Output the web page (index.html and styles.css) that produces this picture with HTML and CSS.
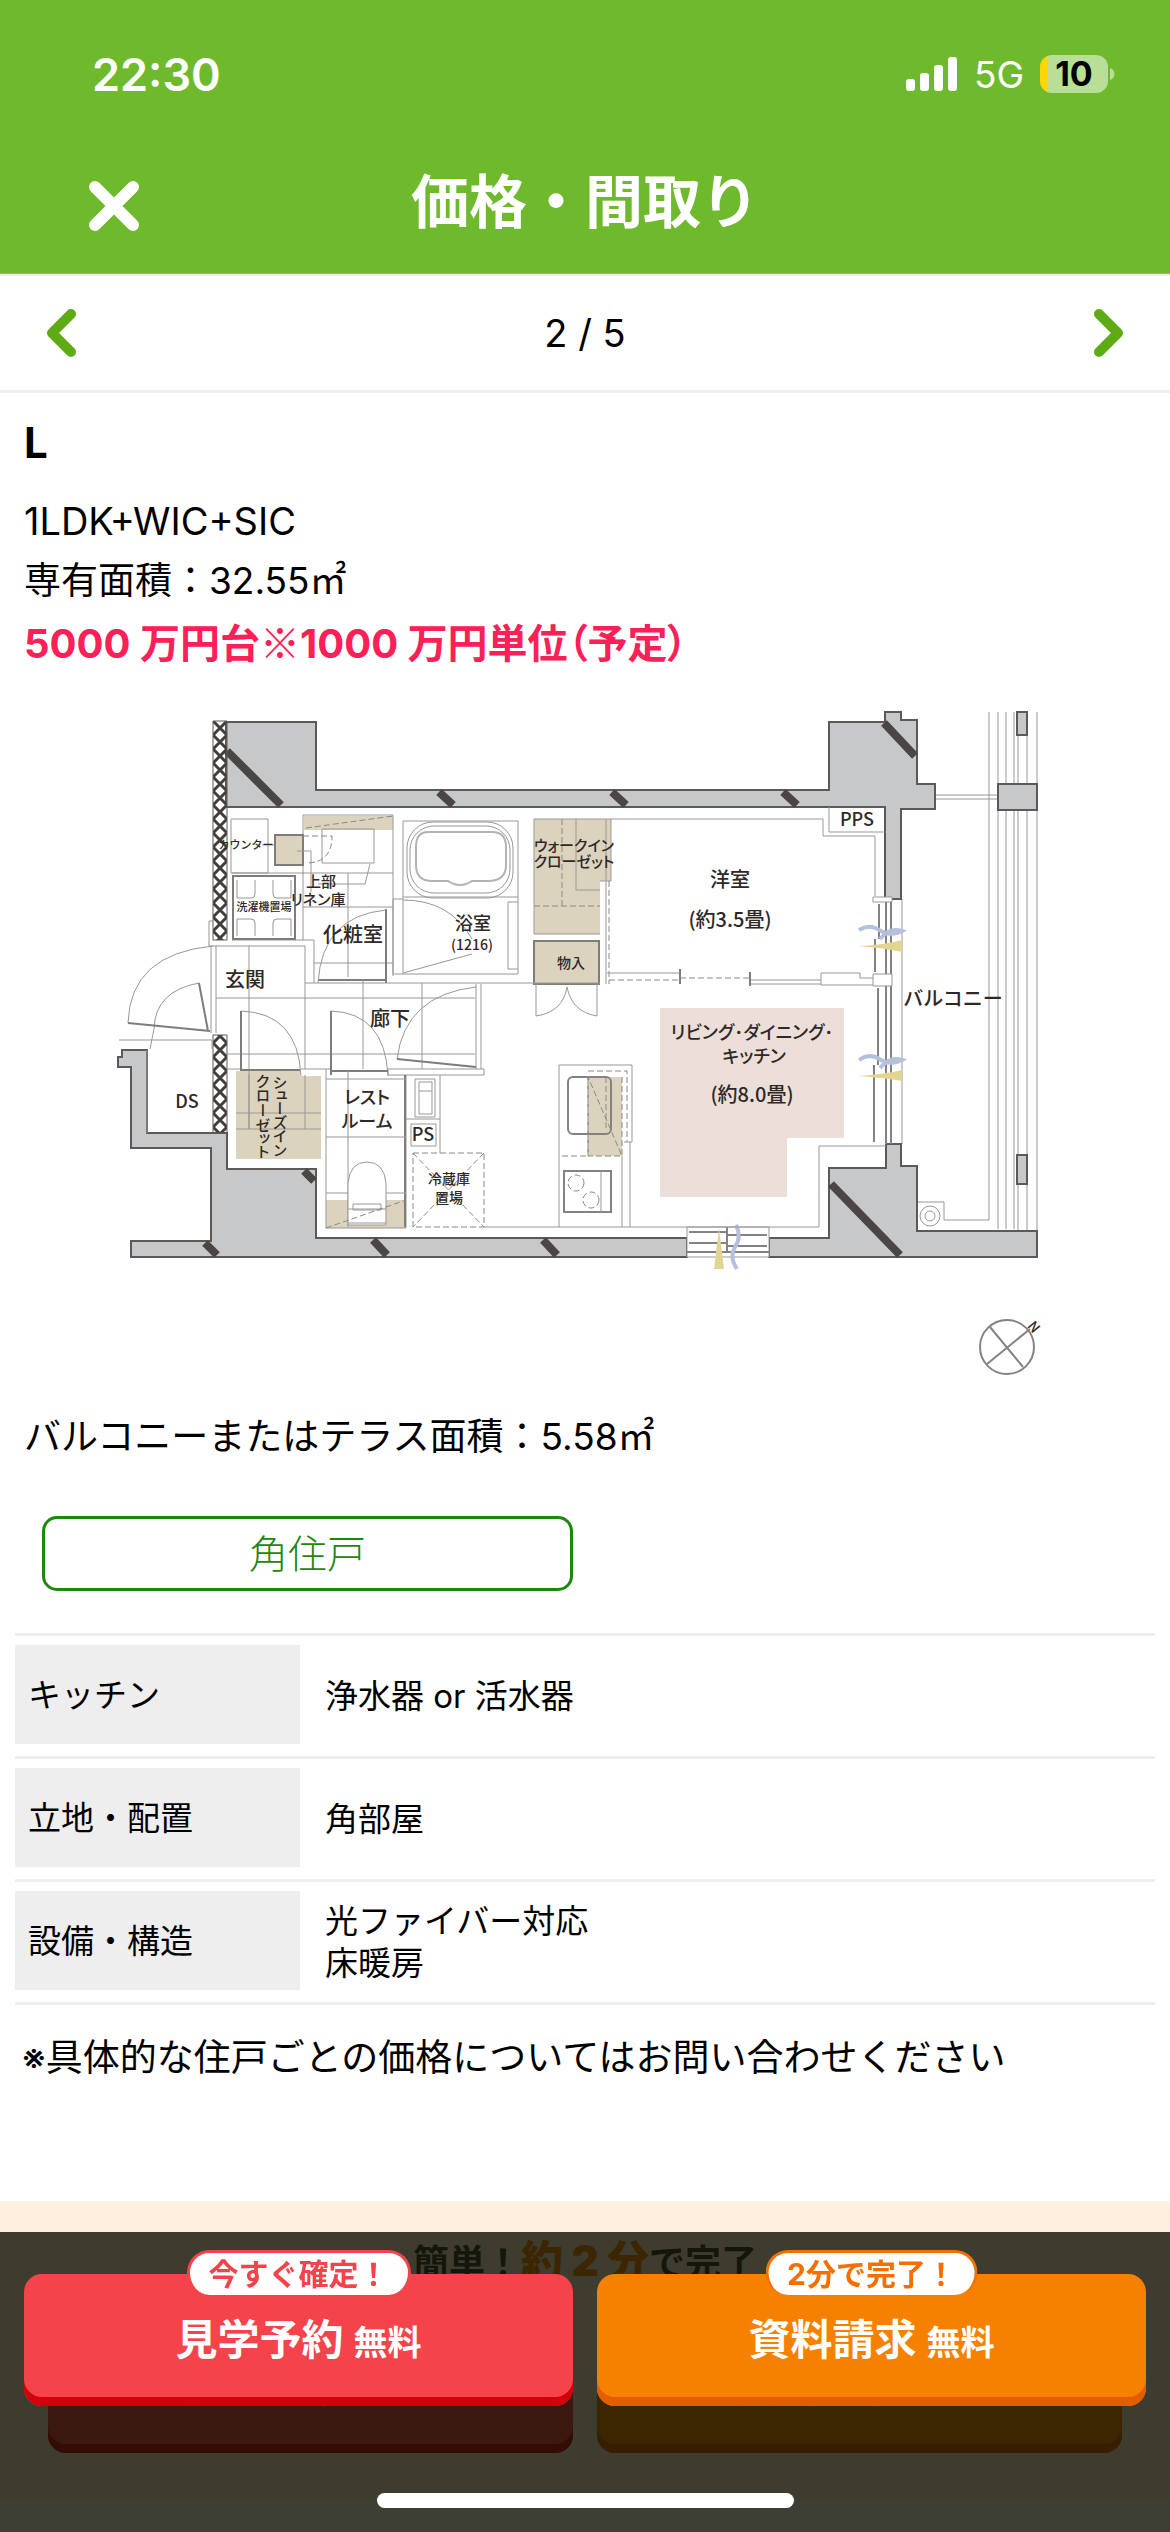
FILE: index.html
```html
<!DOCTYPE html>
<html lang="ja">
<head>
<meta charset="utf-8">
<meta name="viewport" content="width=device-width, initial-scale=1">
<title>価格・間取り</title>
<link rel="stylesheet" href="styles.css">
</head>
<body>
<header class="header">
  <div class="status">
    <span class="clock">22:30</span>
    <div class="status-icons">
      <svg class="signal" viewBox="0 0 52 36" aria-hidden="true"><rect x="0" y="23" width="9" height="12" rx="3"/><rect x="14" y="17" width="9" height="18" rx="3"/><rect x="28" y="9" width="9" height="26" rx="3"/><rect x="42" y="1" width="9" height="34" rx="3"/></svg>
      <span class="network">5G</span>
      <span class="battery">10</span>
      <svg class="nub" viewBox="0 0 5 12" aria-hidden="true"><path d="M0 0C6 2 6 10 0 12z"/></svg>
    </div>
  </div>
  <div class="titlebar">
    <button class="close" type="button" aria-label="閉じる"><svg viewBox="0 0 52 52"><path d="M7 7L45 45M45 7L7 45"/></svg></button>
    <h1 class="title">価格・間取り</h1>
  </div>
</header>
<nav class="pager">
  <button class="arrow" type="button" aria-label="前へ"><svg viewBox="0 0 30 50"><path d="M25 6L6 25L25 44"/></svg></button>
  <span class="count">2 / 5</span>
  <button class="arrow" type="button" aria-label="次へ"><svg viewBox="0 0 30 50"><path d="M5 6L24 25L5 44"/></svg></button>
</nav>
<main>
  <section class="summary">
    <h2 class="type">L</h2>
    <p class="line layout">1LDK+WIC+SIC</p>
    <p class="line">専有面積：32.55㎡</p>
    <p class="price">5000 万円台<span class="mark">※</span>1000 万円単位（予定）</p>
  </section>
  <svg class="plan" viewBox="0 700 1170 690" role="img" aria-label="間取り図">
    <defs>
      <pattern id="mesh" x="213" y="722" width="14" height="14" patternUnits="userSpaceOnUse"><path class="mesh" d="M0 0L14 14M14 0L0 14"/></pattern>
    </defs>
    <!-- balcony rails -->
    <path class="thin" d="M989 713V1221M998 713V1230M1006 713V1230M1014 713V1230M1018 713V1232M1027 713V1232M1037 713V1232M935 796H998M935 800H998M902 900V1145M918 1203H944V1221H989"/>
    <circle class="thin" cx="930" cy="1217" r="10"/><circle class="thin" cx="930" cy="1217" r="5"/>
    <path class="wall" d="M1017 713h10v23h-10zM998 785h39v26h-39zM1017 1156h10v29h-10z"/>
    <!-- outer walls -->
    <path class="wall" d="M226 723H316V791H829V723H885V713H901V721H917V785H935V810H901V900H885V808H226z"/>
    <path class="wall" d="M122 1051H147V1134H227V1170H316V1239H687V1258H131V1242H211V1149H131V1068H118V1058H122z"/>
    <path class="wall" d="M769 1258V1239H829V1169H886V1145H901V1167H917V1232H1037V1258z"/>
    <path class="brace" d="M227 752L281 806M439 793L453 806M612 793L626 806M783 793L797 806M884 724L915 757M205 1244L217 1256M304 1172L314 1182M373 1241L387 1256M543 1241L557 1256M831 1185L900 1256"/>
    <path fill="url(#mesh)" class="meshwall" d="M213 722h14v219h-14zM213 1036h14v98h-14z"/>
    <!-- fills -->
    <path class="beige" d="M304 817h89v14h-89zM275 836h28v30h-28zM534 820h77v62h-11v53h-66zM534 942h65v43h-65zM236 1072h64v5h21v83h-85zM326 1201h80v28h-80zM588 1078h34v79h-34z"/>
    <path class="pink" d="M660 1009H844V1139H787V1198H660z"/>
    <!-- wet area -->
    <path class="thin" d="M231 820H268V874H231zM262 846H275M303 816H393V977M303 816V941M322 830H374V864H322zM303 874H393M303 908H393M314 964H393M232 941H314V984M348 874V978M304 874H232M403 822H518V975H393V900H403zM403 898H518M403 900V975M508 903V970H518M508 903H518"/>
    <path class="line2" d="M275 836h28v30h-28zM534 942h65v43h-65zM233 877h62v63h-62zM386 910V984M318 981H386"/>
    <path class="thin" d="M403 974L472 955M297 852H311V893M318 885H365L370 865"/>
    <path class="thin" d="M237 881v18h14q4 0 4-4v-14M291 881v18h-14q-4 0-4-4v-14M237 937v-17h14q4 0 4 4v13M291 937v-17h-14q-4 0-4 4v13"/>
    <path class="dash" d="M306 829L393 817M303 837H332Q332 864 306 864M562 820V907M534 907H600"/>
    <rect class="thin" x="407" y="823" width="106" height="76" rx="26"/>
    <rect class="thin" x="410" y="827" width="100" height="67" rx="24"/>
    <path class="tub" d="M428 833H492Q506 833 506 848V866Q506 882 488 882H472Q460 890 448 882H432Q416 882 416 866V848Q416 833 428 833z"/>
    <path class="thin" d="M403 901Q450 901 472 940M386 911Q322 917 318 984"/>
    <!-- entrance and corridor -->
    <path class="thin" d="M209 922h4M209 922V947H305V1070M211 947V1034M216 947V1034M249 947V1130M305 984H600M363 980V1070M422 984V1070M216 999H475M227 1055H475M476 985V1070M481 985V1070M227 1070H240M301 1070H330M388 1070H484V1076H388zM326 1070V1229H406V1076M440 1076V1154M119 1041H212V1050M147 1051V1134"/>
    <path class="thin" d="M213 947Q130 955 128 1024M199 984Q155 992 154 1030L150 1050M241 1012Q298 1014 301 1077M331 1012Q385 1014 388 1077M476 988Q405 996 397 1060"/>
    <path class="line2" d="M128 1024L210 1032M199 984L208 1032M241 1012V1072M331 1012V1076M397 1060L476 1068M241 1071H300M331 1072H388M405 1076V1228"/>
    <path class="thin" d="M249 1076V1130M305 1076V1130M236 1114H321M236 1130H321M326 1080H406M326 1138H406M326 1194H406M348 1072V1228M406 1120H440M411 1125h25v22h-25zM415 1080h20v38h-20zM419 1083h13v32h-13zM419 1092h13"/>
    <path class="thin white" d="M348 1226V1184Q350 1163 367 1163Q384 1163 386 1184V1226z"/>
    <path class="thin" d="M353 1205H381V1211H353zM348 1210H386M348 1224H386"/>
    <path class="dash" d="M326 1229L406 1201M413 1154H484V1228H413zM413 1154L484 1228M484 1154L413 1228"/>
    <!-- bedroom -->
    <path class="thin" d="M534 820H823V837H875V897M829 808V833H885M606 820V985M611 820V882H600M576 820V891H600M534 820V935H600M607 974H680M750 981H821M750 985H821M821 974H860V979H885M821 974V986H885M536 985V1017Q563 1013 567 988Q572 1013 597 1017V985"/>
    <path class="dash" d="M609 882V985M609 981H680M680 979H750"/>
    <path class="line2" d="M680 970V985M750 973V987"/>
    <!-- windows -->
    <path class="thin white" d="M873 898h19v5h-19zM873 975h19v12h-19z"/>
    <path class="line3" d="M879 905V940M875 940V973M886 903V975M891 903V975M878 989V1066M874 1066V1143M886 987V1145M891 987V1145"/>
    <path class="thin white" d="M687 1228H769V1258H687z"/>
    <path class="line3" d="M689 1233H727M689 1244H727M727 1228V1252M727 1236H767M727 1247H767M687 1253H769"/>
    <path class="curtain-y" d="M858 947Q885 946 902 941V953Q885 949 858 947zM858 1077Q885 1075 902 1071V1082Q885 1079 858 1077zM719 1229L724 1270H714z"/>
    <path class="curtain-b" d="M859 931Q870 924 881 932Q891 938 902 932Q890 928 880 940M859 1061Q870 1053 881 1061Q891 1067 902 1061Q890 1057 880 1069M736 1226Q742 1238 735 1248Q729 1258 737 1270"/>
    <!-- living area -->
    <path class="thin" d="M484 1228H819V1147H886M559 1066H632V1143H624M559 1066V1228M622 1157V1228M630 1143V1228"/>
    <rect class="line3" x="568" y="1078" width="43" height="57" rx="5"/>
    <path class="dash" d="M588 1078V1157H559M588 1072H627V1143M622 1078V1157H588L588 1078L622 1157M606 1078V1130"/>
    <rect class="line3" x="564" y="1172" width="47" height="41"/><path class="thin" d="M601 1172V1213"/>
    <circle class="dash" cx="576" cy="1184" r="8"/><circle class="dash" cx="591" cy="1201" r="8"/>
    <!-- compass -->
    <circle class="line3" cx="1007" cy="1348" r="27"/><path class="line3" d="M990 1328L1023 1368M987 1365L1030 1330"/>
    <text class="t14" x="1034" y="1333" transform="rotate(50 1034 1328)">N</text>
    <!-- room names -->
    <text class="t18" x="857" y="827">PPS</text>
    <text class="t18" x="187" y="1109">DS</text>
    <text class="t18" x="423" y="1142">PS</text>
    <text class="t20" x="730" y="888">洋室</text>
    <text class="t20" x="730" y="928">(約3.5畳)</text>
    <text class="t12" x="574" y="852">ウォークイン</text>
    <text class="t12" x="574" y="868">クローゼット</text>
    <text class="t14" x="571" y="969">物入</text>
    <text class="t18" x="473" y="931">浴室</text>
    <text class="t14" x="472" y="951">(1216)</text>
    <text class="t10" x="246" y="850">カウンター</text>
    <text class="t12" x="321" y="888">上部</text>
    <text class="t12" x="318" y="906">リネン庫</text>
    <text class="t10" x="264" y="912">洗濯機置場</text>
    <text class="t20" x="353" y="943">化粧室</text>
    <text class="t20" x="245" y="988">玄関</text>
    <text class="t20" x="390" y="1027">廊下</text>
    <text class="t12 vertical" x="280" y="1117">シューズイン</text>
    <text class="t12 vertical" x="263" y="1117">クローゼット</text>
    <text class="t18" x="367" y="1105">レスト</text>
    <text class="t18" x="367" y="1129">ルーム</text>
    <text class="t14" x="449" y="1185">冷蔵庫</text>
    <text class="t14" x="449" y="1204">置場</text>
    <text class="t18" x="752" y="1040">リビング･ダイニング･</text>
    <text class="t18" x="754" y="1064">キッチン</text>
    <text class="t20" x="752" y="1103">(約8.0畳)</text>
    <text class="t20" x="953" y="1007">バルコニー</text>
  </svg>
  <p class="line balcony">バルコニーまたはテラス面積：5.58㎡</p>
  <ul class="tags"><li class="tag">角住戸</li></ul>
  <table class="specs">
    <tr><th scope="row"><div class="label">キッチン</div></th><td>浄水器 or 活水器</td></tr>
    <tr><th scope="row"><div class="label">立地・配置</div></th><td>角部屋</td></tr>
    <tr><th scope="row"><div class="label">設備・構造</div></th><td>光ファイバー対応<br>床暖房</td></tr>
  </table>
  <p class="note">※具体的な住戸ごとの価格についてはお問い合わせください</p>
</main>
<section class="promo">
  <p class="lead">簡単！<strong>約 2 分</strong>で完了</p>
  <div class="actions">
    <button class="cta red" type="button">見学予約 <small>無料</small></button>
    <button class="cta orange" type="button">資料請求 <small>無料</small></button>
  </div>
</section>
<div class="dock">
  <div class="actions">
    <button class="cta red" type="button"><span class="badge">今すぐ確定！</span>見学予約 <small>無料</small></button>
    <button class="cta orange" type="button"><span class="badge">2分で完了！</span>資料請求 <small>無料</small></button>
  </div>
  <div class="home"></div>
</div>
</body>
</html>
```

FILE: styles.css
```css
* { box-sizing: border-box; }
body {
  margin: 0;
  background: #fff;
  color: #000;
  font-family: Inter, "Noto Sans CJK JP", sans-serif;
  font-size: 37px;
  padding-bottom: 31px;
}
h1, h2, p, ul { margin: 0; padding: 0; }
button { font: inherit; border: 0; padding: 0; background: none; }

.header { background: #6fba2c; color: #fff; border-bottom: 1px solid #a5a5a5; }
.status { display: flex; justify-content: space-between; align-items: center; height: 148px; padding: 0 55px 0 92px; }
.clock { font-size: 45px; font-weight: 600; }
.status-icons { display: flex; align-items: center; }
.signal { width: 52px; height: 36px; fill: #fff; margin-right: 16px; }
.network { font-size: 37px; font-weight: 400; margin-right: 16px; }
.battery {
  width: 68px; height: 38px; border-radius: 12px; line-height: 38px;
  background: linear-gradient(90deg, #ffd60a 8px, #b9de97 8px);
  color: #000; font-size: 34px; font-weight: 700; text-align: center;
}
.nub { width: 5px; height: 12px; fill: #b9de97; margin-left: 2px; }
.titlebar { display: grid; grid-template-columns: 140px 1fr 140px; align-items: center; height: 125px; padding-bottom: 14px; }
.close { display: flex; justify-content: flex-end; padding-top: 4px; }
.close svg { width: 52px; height: 52px; fill: none; stroke: #fff; stroke-width: 12; stroke-linecap: round; }
.title { font-size: 58px; line-height: 84px; font-weight: 700; text-align: center; padding-bottom: 4px; }

.pager { display: flex; justify-content: space-between; align-items: center; height: 119px; padding: 0 46px; border-top: 2px solid #eee; border-bottom: 3px solid #eee; }
.arrow { display: flex; }
.arrow svg { width: 30px; height: 50px; fill: none; stroke: #5fab14; stroke-width: 10; stroke-linecap: round; stroke-linejoin: round; }
.count { font-size: 38px; }

.summary { padding: 18px 24px 0; }
.type { font-size: 42px; line-height: 64px; font-weight: 700; margin-bottom: 16px; }
.line { font-size: 37px; line-height: 60px; }
.layout { font-size: 38px; }
.price { height: 60px; font-size: 40px; line-height: 60px; font-weight: 700; color: #fb2057; font-feature-settings: "palt"; }
.mark { font-family: "Noto Sans CJK JP", sans-serif; font-weight: 500; }

.plan { display: block; width: 100%; height: auto; margin-top: 28px; }
.plan .wall { fill: #c7c8c9; stroke: #5c5a59; stroke-width: 2; }
.plan .brace { fill: none; stroke: #4b4543; stroke-width: 8; }
.plan .mesh { fill: none; stroke: #443d3a; stroke-width: 3; }
.plan .meshwall { stroke: #5c5a59; stroke-width: 1; }
.plan .beige { fill: #dcd3bf; }
.plan .pink { fill: #ecdfd9; }
.plan .thin { fill: none; stroke: #9a9795; stroke-width: 1; }
.plan .white { fill: #fff; }
.plan .line2 { fill: none; stroke: #807c7a; stroke-width: 2; }
.plan .line3 { fill: none; stroke: #86827f; stroke-width: 2; }
.plan .tub { fill: none; stroke: #b5b2b0; stroke-width: 2; }
.plan .dash { fill: none; stroke: #8c8783; stroke-width: 1; stroke-dasharray: 6 3; }
.plan .curtain-y { fill: #e2d591; }
.plan .curtain-b { fill: none; stroke: #b5c0dc; stroke-width: 4; }
.plan text { fill: #2e2826; text-anchor: middle; font-family: "Noto Sans CJK JP", sans-serif; font-weight: 500; }
.t10 { font-size: 11px; }
.t12 { font-size: 15px; font-feature-settings: "palt"; }
.t14 { font-size: 14px; }
.t18 { font-size: 18px; font-feature-settings: "palt"; }
.t20 { font-size: 20px; }
.vertical { writing-mode: vertical-rl; font-feature-settings: "vpal"; }

.balcony { padding: 18px 24px 0; }
.tags { display: grid; grid-template-columns: 531px; list-style: none; padding: 49px 42px 42px; }
.tag { height: 75px; border: 3px solid #1e870f; border-radius: 15px; color: #1e870f; font-size: 39px; line-height: 69px; font-weight: 300; text-align: center; }

.specs { width: calc(100% - 30px); margin: 0 15px; border-collapse: collapse; border-top: 3px solid #eee; font-size: 33px; line-height: 42px; }
.specs tr { border-bottom: 3px solid #eee; }
.specs th { width: 285px; padding: 9px 0 12px; font-weight: 400; text-align: left; }
.specs td { padding: 0 0 0 25px; }
.label { display: flex; align-items: center; height: 99px; padding-left: 13px; background: #eee; }
.note { font-size: 37px; line-height: 54px; padding: 26px 22px 116px; }

.promo { background: #fdf0df; padding: 36px 48px 47px; }
.lead { height: 48px; font-size: 36px; line-height: 48px; font-weight: 700; color: #333; text-align: center; margin-bottom: 36px; }
.lead strong { font-size: 42px; color: #f58100; }
.actions { display: grid; grid-template-columns: 1fr 1fr; gap: 24px; }
.cta { position: relative; height: 132px; padding-bottom: 7px; border-radius: 18px; color: #fff; font-size: 42px; font-weight: 700; }
.cta small { font-size: 34px; }
.red { background: #f5434c; box-shadow: inset 0 -9px #d1000b; }
.orange { background: #f68100; box-shadow: inset 0 -9px #e35d00; }

.dock { position: fixed; left: 0; right: 0; bottom: 0; height: 300px; padding: 42px 24px 0; background: rgba(12, 15, 1, .8); }
.badge {
  position: absolute; top: -24px; left: 50%; transform: translateX(-50%);
  padding: 0 19px; border: 3px solid; border-bottom-width: 0; border-radius: 23px;
  background: #fff; font-size: 30px; line-height: 42px; white-space: nowrap;
}
.red .badge { color: #f5434c; }
.orange .badge { color: #f37000; }
.home { width: 417px; height: 15px; margin: 87px auto 0; border-radius: 8px; background: #fff; }
```
